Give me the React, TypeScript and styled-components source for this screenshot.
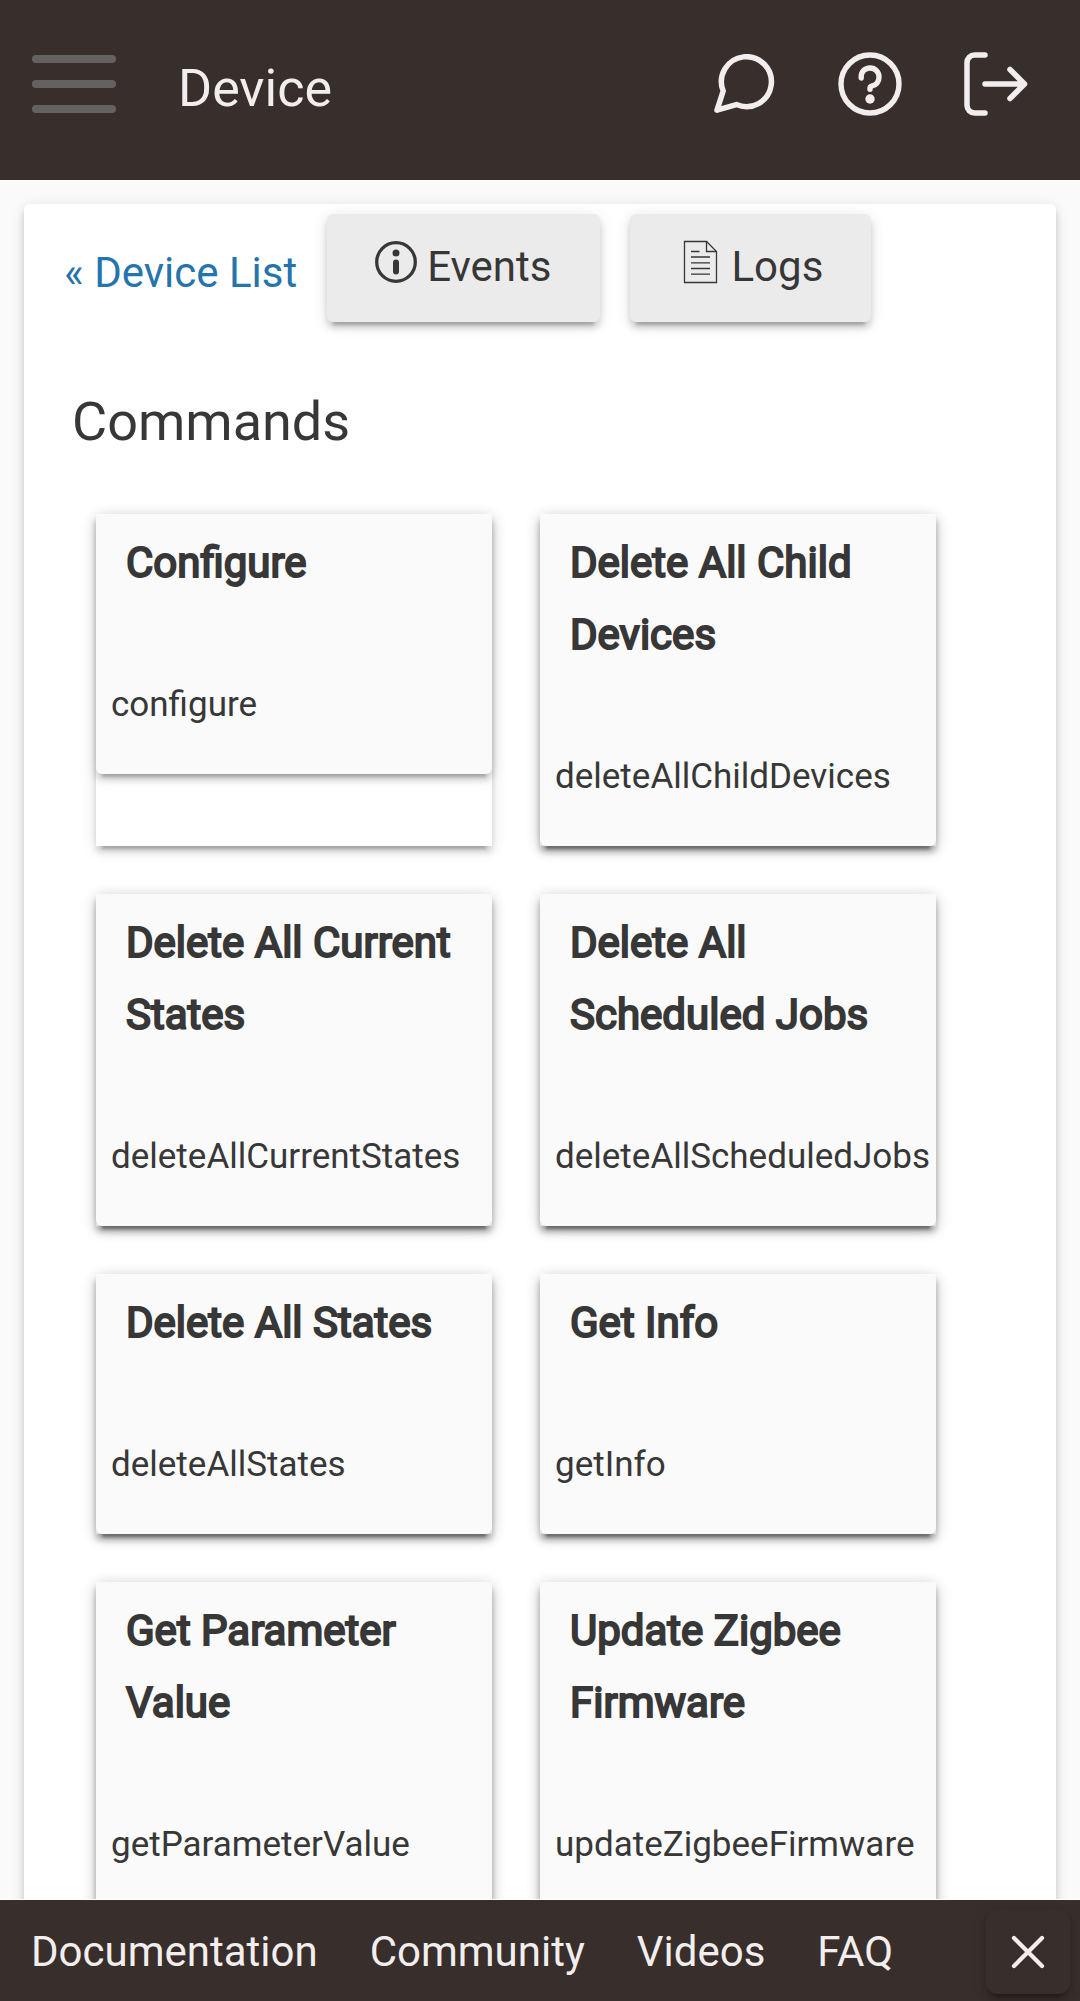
import React from "react";
import styled, { createGlobalStyle } from "styled-components";

const color = {
  bar: "#382e2c",
  barText: "#f2eeed",
  burger: "#636261",
  page: "#fafafa",
  panel: "#ffffff",
  button: "#ebebeb",
  text: "#373737",
  link: "#2474ae",
};

const raised =
  "0 6px 6px 0 rgba(0,0,0,.14), 0 9px 3px -6px rgba(0,0,0,.2), 0 3px 15px 0 rgba(0,0,0,.12)";

const GlobalStyle = createGlobalStyle`
  *, *::before, *::after { box-sizing: border-box; }
  body { margin: 0; background: ${color.page}; color: ${color.text}; }
  body, button { font-family: Roboto, "Liberation Sans", sans-serif; font-size: 42px; line-height: 72px; }
  h1, h2, ul { margin: 0; padding: 0; font-weight: 400; }
  button { border: 0; padding: 0; margin: 0; background: none; color: inherit; cursor: pointer; }
  a { text-decoration: none; }
  svg { display: block; flex: none; }
`;

const Page = styled.div`
  display: flex;
  flex-direction: column;
  height: 100vh;
`;

const Header = styled.header`
  display: flex;
  align-items: center;
  flex: none;
  height: 180px;
  padding: 0 52px 12px 32px;
  background: ${color.bar};
  color: ${color.barText};
`;

const MenuButton = styled.button`
  display: flex;
  flex-direction: column;
  justify-content: space-between;
  width: 84px;
  height: 58px;
`;

const MenuLine = styled.span`
  height: 8px;
  border-radius: 4px;
  background: ${color.burger};
`;

const Title = styled.h1`
  flex: 1;
  padding: 10px 0 0 62px;
  font-size: 52px;
`;

const HeaderActions = styled.nav`
  display: flex;
  align-items: center;
  gap: 62px;
`;

const Content = styled.main`
  flex: 1;
  min-height: 0;
  overflow-y: auto;
  scrollbar-width: none;
  padding: 24px;
`;

const Panel = styled.section`
  padding: 10px 120px 48px 72px;
  border-radius: 6px;
  background: ${color.panel};
  box-shadow: ${raised};
`;

const Toolbar = styled.div`
  display: flex;
  align-items: flex-start;
  gap: 30px;
  margin-left: -32px;
`;

const BackLink = styled.a`
  padding-top: 23px;
  color: ${color.link};
  white-space: nowrap;
`;

const ToolButton = styled.button`
  display: flex;
  align-items: center;
  gap: 10px;
  padding: 17px 48px 19px;
  border-radius: 6px;
  background: ${color.button};
  box-shadow: ${raised};

  svg { margin-bottom: 10px; }
`;

const SectionTitle = styled.h2`
  margin: 64px 0 56px -24px;
  font-size: 54px;
`;

const CommandGrid = styled.ul`
  display: grid;
  grid-template-columns: repeat(2, minmax(0, 1fr));
  gap: 48px;
  list-style: none;
`;

const CommandCell = styled.li`
  display: flex;
  align-items: flex-start;
  box-shadow: ${raised};
`;

const CommandTile = styled.button`
  display: flex;
  flex-direction: column;
  flex: 1;
  min-width: 0;
  padding: 13px 0 33px;
  border-radius: 6px;
  background: ${color.page};
  box-shadow: ${raised};
  text-align: left;
`;

/* Only the regular cut is used here, thickened with a stroke of its own colour. */
const CommandName = styled.span`
  padding: 0 30px;
  margin-bottom: 70px;
  -webkit-text-stroke: 2px currentColor;
  paint-order: stroke fill;
`;

const CommandMethod = styled.span`
  padding-left: 15px;
  font-size: 35px;
`;

const Footer = styled.footer`
  display: flex;
  align-items: center;
  flex: none;
  height: 102px;
  padding: 2px 10px 0 31px;
  border-top: 1px solid #ffffff;
  background: ${color.bar};
  color: ${color.barText};
`;

const FooterNav = styled.nav`
  display: flex;
  flex: 1;
  gap: 52px;
`;

const FooterLink = styled.a`
  color: inherit;
`;

const CloseButton = styled.button`
  display: flex;
  align-items: center;
  justify-content: center;
  width: 84px;
  height: 84px;
  border-radius: 12px;
  box-shadow: ${raised};
`;

const ChatIcon = () => (
  <svg width="62" height="60" viewBox="0 0 62 60" fill="none" stroke="currentColor" strokeWidth="5.5" strokeLinecap="round" strokeLinejoin="round" aria-hidden="true">
    <path d="M9.2 37 3 56.2 22.4 50.6A25 25 0 1 0 9.2 37Z" />
  </svg>
);

const HelpIcon = () => (
  <svg width="64" height="64" viewBox="0 0 64 64" fill="none" stroke="currentColor" strokeWidth="5.4" strokeLinecap="round" aria-hidden="true">
    <circle cx="32" cy="32" r="29" />
    <path d="M23.2 26c-.5-6.2 3.6-10 8.8-10s9 3.900 9 9.200c0 4.600-2.900 7.800-6.800 8.600-1.700.4-2.200 1.200-2.200 2.500v1" />
    <circle cx="32" cy="47" r="4.7" fill="currentColor" stroke="none" />
  </svg>
);

const LogoutIcon = () => (
  <svg width="64" height="64" viewBox="0 0 64 64" fill="none" stroke="currentColor" strokeWidth="5.5" strokeLinecap="round" strokeLinejoin="round" aria-hidden="true">
    <path d="M21 3H10.5A7.500 7.500 0 0 0 3 10.500V53.500A7.500 7.500 0 0 0 10.500 61H21" />
    <path d="M21 32H60.500M46 17.500 60.500 32 46 46.500" />
  </svg>
);

const InfoIcon = () => (
  <svg width="42" height="44" viewBox="0 0 42 44" fill="none" aria-hidden="true">
    <circle cx="21" cy="22" r="19.3" stroke="currentColor" strokeWidth="3.3" />
    <circle cx="21" cy="13" r="3.5" fill="currentColor" />
    <rect x="18" y="19.5" width="6" height="15" rx="3" fill="currentColor" />
  </svg>
);

const DocumentIcon = () => (
  <svg width="44" height="44" viewBox="-1 0 44 44" fill="none" stroke="currentColor" strokeWidth="1.3" aria-hidden="true">
    <path d="M5.500 1.500H27.500L37.500 11.500V42.500H5.500Z" />
    <path d="M27.500 1.500V11.500H37.500" />
    <path d="M12 11.500h8.500M12 17h19M12 22.800h19M12 28.500h19M12 34.200h19" />
  </svg>
);

const CloseIcon = () => (
  <svg width="34" height="34" viewBox="0 0 34 34" stroke="currentColor" strokeWidth="4.2" strokeLinecap="round" aria-hidden="true">
    <path d="M3 3 31 31M31 3 3 31" />
  </svg>
);

const commands = [
  { name: "Configure", method: "configure" },
  { name: "Delete All Child Devices", method: "deleteAllChildDevices" },
  { name: "Delete All Current States", method: "deleteAllCurrentStates" },
  { name: "Delete All Scheduled Jobs", method: "deleteAllScheduledJobs" },
  { name: "Delete All States", method: "deleteAllStates" },
  { name: "Get Info", method: "getInfo" },
  { name: "Get Parameter Value", method: "getParameterValue" },
  { name: "Update Zigbee Firmware", method: "updateZigbeeFirmware" },
];

const footerLinks = ["Documentation", "Community", "Videos", "FAQ"];

export default function App() {
  return (
    <>
      <GlobalStyle />
      <Page>
        <Header>
          <MenuButton type="button" aria-label="Menu">
            <MenuLine />
            <MenuLine />
            <MenuLine />
          </MenuButton>
          <Title>Device</Title>
          <HeaderActions>
            <button type="button" aria-label="Chat"><ChatIcon /></button>
            <button type="button" aria-label="Help"><HelpIcon /></button>
            <button type="button" aria-label="Log out"><LogoutIcon /></button>
          </HeaderActions>
        </Header>

        <Content>
          <Panel>
            <Toolbar>
              <BackLink href="#devices">« Device List</BackLink>
              <ToolButton type="button"><InfoIcon />Events</ToolButton>
              <ToolButton type="button"><DocumentIcon />Logs</ToolButton>
            </Toolbar>
            <SectionTitle>Commands</SectionTitle>
            <CommandGrid>
              {commands.map(({ name, method }) => (
                <CommandCell key={method}>
                  <CommandTile type="button">
                    <CommandName>{name}</CommandName>
                    <CommandMethod>{method}</CommandMethod>
                  </CommandTile>
                </CommandCell>
              ))}
            </CommandGrid>
          </Panel>
        </Content>

        <Footer>
          <FooterNav>
            {footerLinks.map((label) => (
              <FooterLink key={label} href={`#${label.toLowerCase()}`}>{label}</FooterLink>
            ))}
          </FooterNav>
          <CloseButton type="button" aria-label="Close"><CloseIcon /></CloseButton>
        </Footer>
      </Page>
    </>
  );
}
